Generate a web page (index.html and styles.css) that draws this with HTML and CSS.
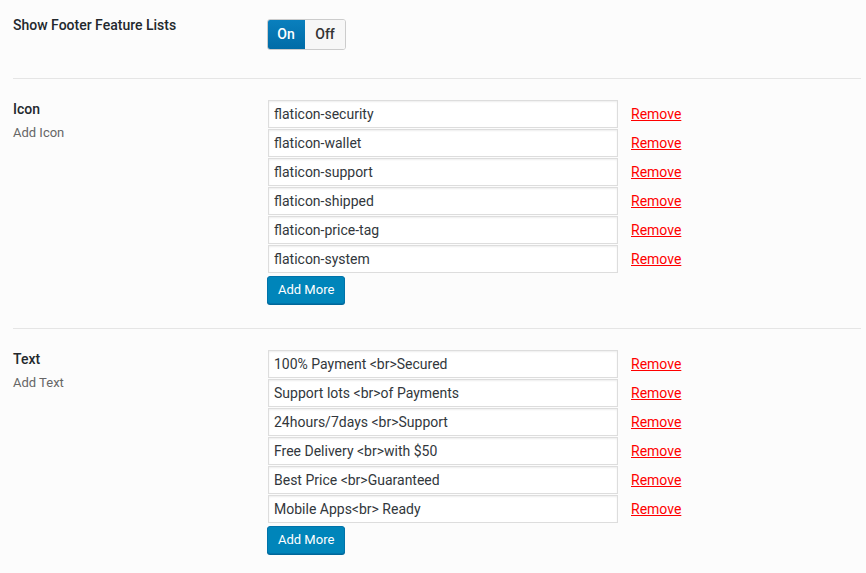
FILE: index.html
```html
<!DOCTYPE html>
<html lang="en">
<head>
    <meta charset="UTF-8">
    <meta name="viewport" content="width=device-width, initial-scale=1"/>
    <title>Footer Feature Lists</title>
    <link rel="stylesheet" href="styles.css">
</head>
<body>
    <div class="option-row row-first">
        <div class="option-label">
            <div class="label-title">Show Footer Feature Lists</div>
        </div>
        <div class="option-field">
            <div class="switch">
                <span class="switch-on">On</span>
                <span class="switch-off">Off</span>
            </div>
        </div>
    </div>

    <div class="option-row">
        <div class="option-label">
            <div class="label-title">Icon</div>
            <div class="label-desc">Add Icon</div>
        </div>
        <div class="option-field">
            <ul class="repeat-list">
                <li><input type="text" class="repeat-input" value="flaticon-security"><a href="#" class="remove-link">Remove</a></li>
                <li><input type="text" class="repeat-input" value="flaticon-wallet"><a href="#" class="remove-link">Remove</a></li>
                <li><input type="text" class="repeat-input" value="flaticon-support"><a href="#" class="remove-link">Remove</a></li>
                <li><input type="text" class="repeat-input" value="flaticon-shipped"><a href="#" class="remove-link">Remove</a></li>
                <li><input type="text" class="repeat-input" value="flaticon-price-tag"><a href="#" class="remove-link">Remove</a></li>
                <li><input type="text" class="repeat-input" value="flaticon-system"><a href="#" class="remove-link">Remove</a></li>
            </ul>
            <button type="button" class="btn-add">Add More</button>
        </div>
    </div>

    <div class="option-row">
        <div class="option-label">
            <div class="label-title">Text</div>
            <div class="label-desc">Add Text</div>
        </div>
        <div class="option-field">
            <ul class="repeat-list">
                <li><input type="text" class="repeat-input" value="100% Payment <br>Secured"><a href="#" class="remove-link">Remove</a></li>
                <li><input type="text" class="repeat-input" value="Support lots <br>of Payments"><a href="#" class="remove-link">Remove</a></li>
                <li><input type="text" class="repeat-input" value="24hours/7days <br>Support"><a href="#" class="remove-link">Remove</a></li>
                <li><input type="text" class="repeat-input" value="Free Delivery <br>with $50"><a href="#" class="remove-link">Remove</a></li>
                <li><input type="text" class="repeat-input" value="Best Price <br>Guaranteed"><a href="#" class="remove-link">Remove</a></li>
                <li><input type="text" class="repeat-input" value="Mobile Apps<br> Ready"><a href="#" class="remove-link">Remove</a></li>
            </ul>
            <button type="button" class="btn-add">Add More</button>
        </div>
    </div>
</body>
</html>
```

FILE: styles.css
```css
body{
    margin: 0;
    padding: 0 5px 0 13px;
    background-color: #fcfcfc;
    font-family: Roboto, "Liberation Sans", arial, sans-serif;
    font-size: 14px;
    color: #23282d;
}
.option-row{
    display: flex;
    padding: 20px 0 24px;
    border-bottom: 1px solid #e5e5e5;
}
.row-first{
    padding-top: 15px;
    padding-bottom: 28px;
}
.option-label{
    width: 254px;
    flex-shrink: 0;
    padding-top: 1px;
}
.label-title{
    font-weight: 500;
    line-height: 18px;
}
.label-desc{
    margin-top: 6px;
    font-size: 13px;
    line-height: 18px;
    color: #666;
}
.option-field{
    flex: 1;
}
.switch{
    display: inline-flex;
    margin-top: 4px;
    height: 31px;
    box-sizing: border-box;
    border: 1px solid #ccc;
    border-radius: 3px;
    overflow: hidden;
    font-weight: 500;
    line-height: 29px;
}
.switch-on{
    width: 38px;
    text-align: center;
    color: #fff;
    background: linear-gradient(#0a80be, #006ba6);
    margin: -1px 0 -1px -1px;
    line-height: 31px;
    border-radius: 3px 0 0 3px;
}
.switch-off{
    width: 40px;
    text-align: center;
    color: #333;
    background-color: #f7f7f7;
}
.repeat-list{
    list-style: none;
    margin: 1px 0 0;
    padding: 0;
}
.repeat-list li{
    display: flex;
    align-items: center;
    margin-bottom: 1px;
}
.repeat-input{
    width: 350px;
    height: 28px;
    box-sizing: border-box;
    margin: 0 0 0 1px;
    padding: 0 5px;
    border: 1px solid #ddd;
    background-color: #fff;
    box-shadow: inset 0 1px 2px rgba(0,0,0,0.07);
    font-family: Roboto, "Liberation Sans", arial, sans-serif;
    font-size: 14px;
    color: #32373c;
    outline: none;
}
.remove-link{
    margin-left: 13px;
    color: #f00;
    text-decoration: underline;
    font-size: 14px;
}
.btn-add{
    display: block;
    margin-top: 3px;
    height: 28px;
    padding: 0 10px;
    border: 1px solid #0073aa;
    border-radius: 3px;
    background-color: #0085ba;
    box-shadow: 0 1px 0 #006799;
    color: #fff;
    font-family: Roboto, "Liberation Sans", arial, sans-serif;
    font-size: 13px;
    line-height: 26px;
    cursor: pointer;
}
```
